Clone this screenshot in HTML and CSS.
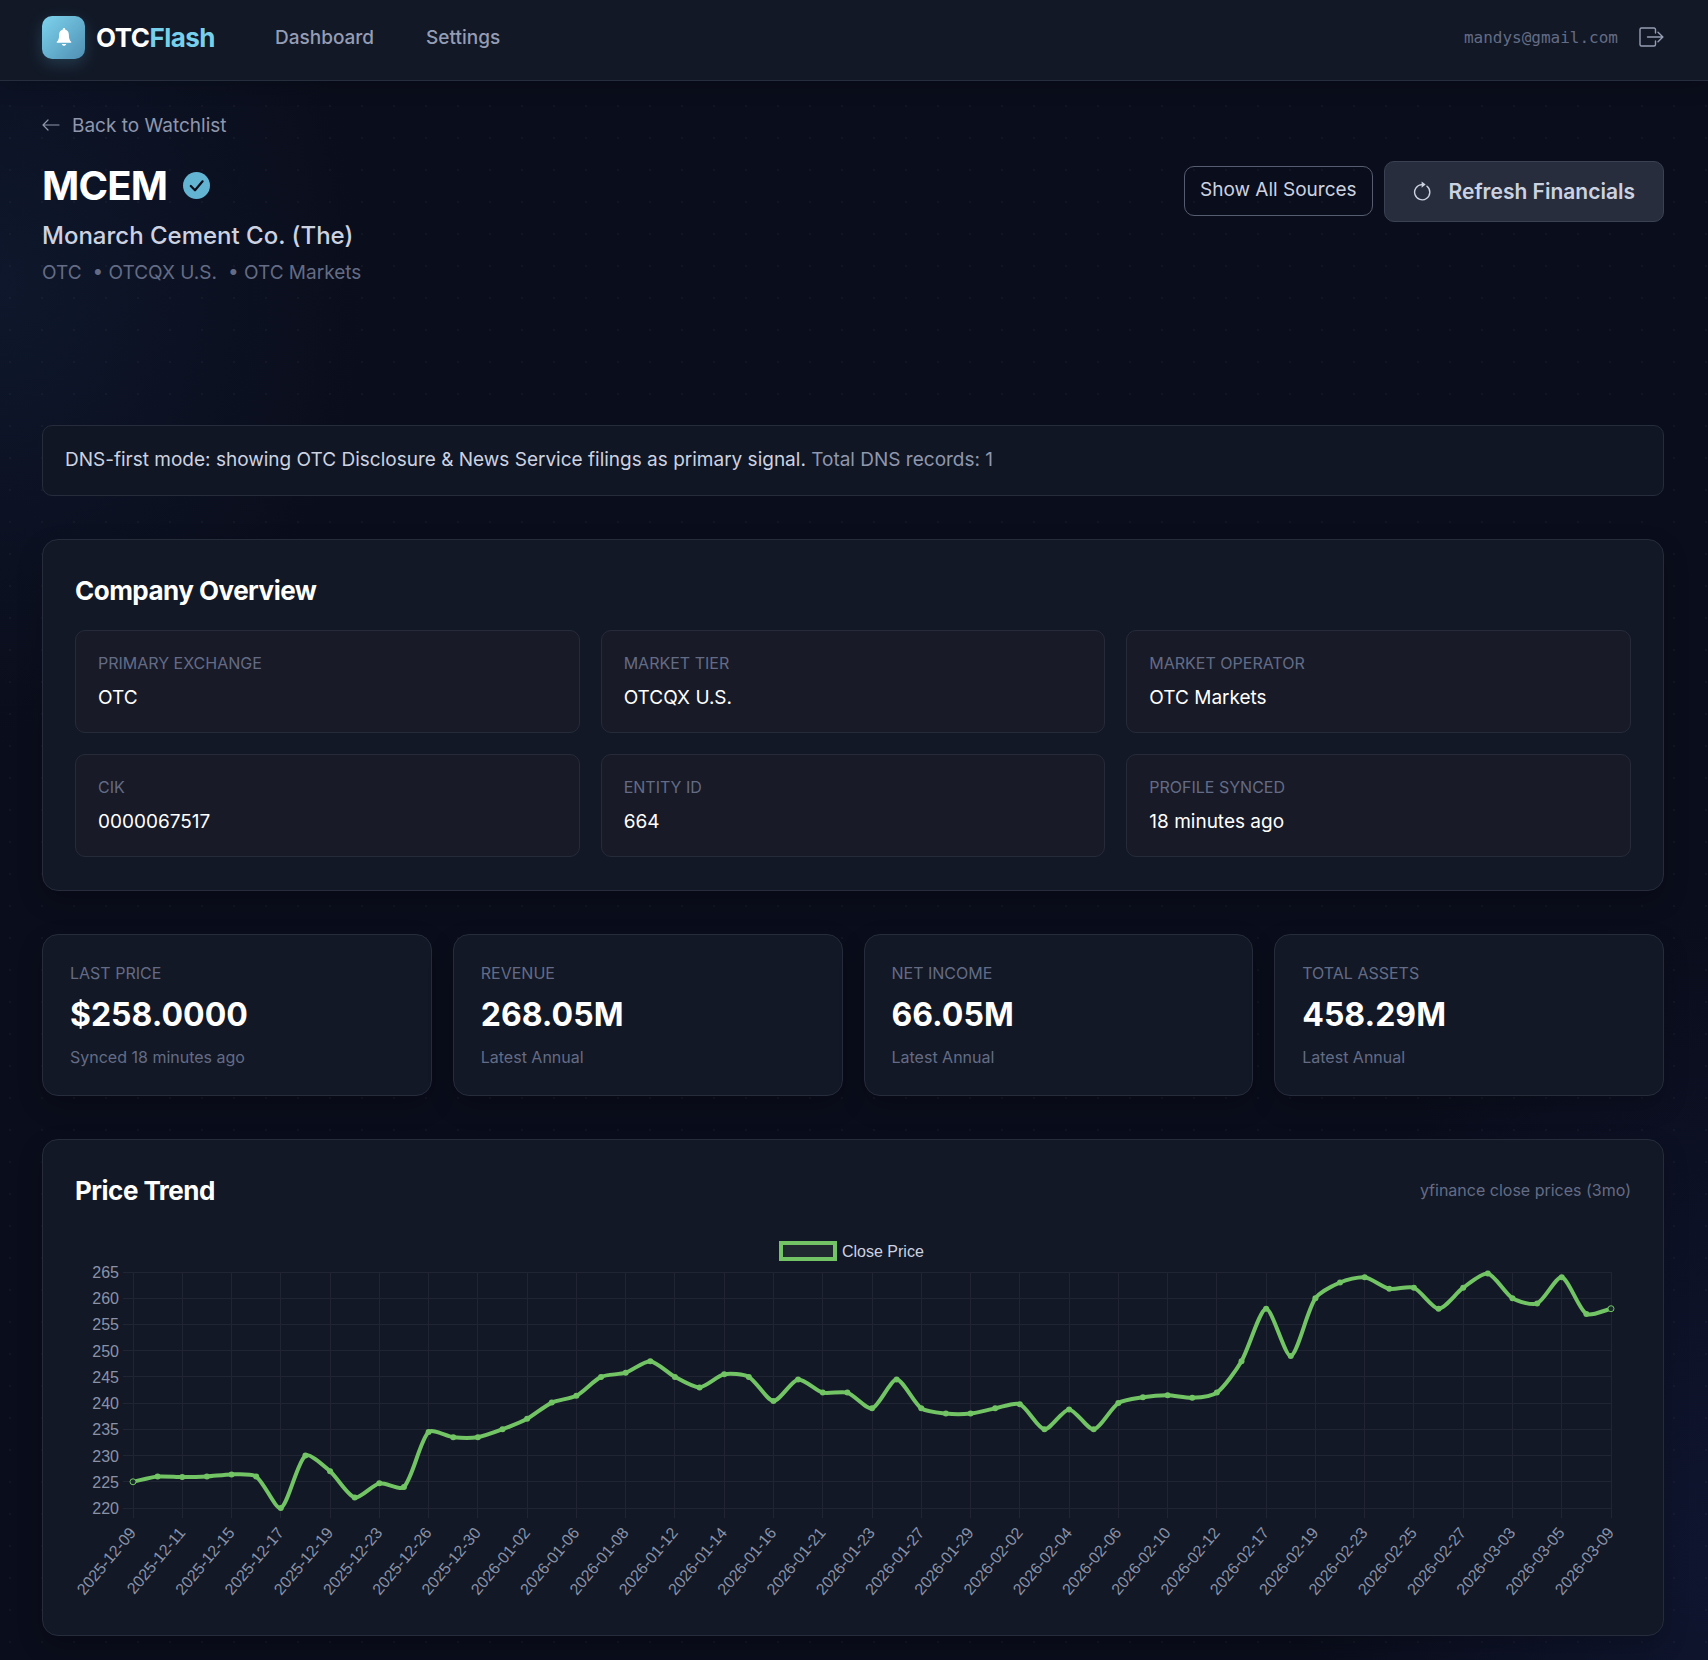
FILE: index.html
```html
<!DOCTYPE html>
<html lang="en">
<head>
    <meta charset="UTF-8">
    <meta name="viewport" content="width=device-width, initial-scale=1.0">
    <title>MCEM - OTCFlash</title>
    <link rel="stylesheet" href="styles.css">
</head>
<body>

    <header class="topbar">
        <a href="#" class="brand">
            <span class="brand-icon">
                <svg viewBox="0 0 24 24" width="22" height="22" fill="#fff">
                    <path d="M12 2.2c-.7 0-1.2.5-1.200 1.200v.4C8.300 4.400 6.700 6.500 6.700 9.200c0 4.200-.7 6.500-2.600 8v1h15.800v-1c-1.900-1.500-2.600-3.800-2.600-8 0-2.700-1.600-4.800-4.100-5.400v-.4c0-.7-.5-1.200-1.200-1.200zM9.600 19.600c.3 1.200 1.200 2 2.400 2s2.100-.8 2.400-2z"/>
                </svg>
            </span>
            <span class="brand-name">OTC<span class="brand-accent">Flash</span></span>
        </a>
        <nav class="nav">
            <a href="#">Dashboard</a>
            <a href="#">Settings</a>
        </nav>
        <div class="user">
            <span class="user-email">mandys@gmail.com</span>
            <button class="logout" aria-label="Log out">
                <svg viewBox="0 0 25 20" width="25" height="20" fill="none" stroke="currentColor" stroke-width="1.4" stroke-linecap="round" stroke-linejoin="round">
                    <path d="M16.500 6V2.500A1.500 1.500 0 0 0 15 1H2.500A1.500 1.500 0 0 0 1 2.500v15A1.500 1.500 0 0 0 2.500 19H15a1.500 1.500 0 0 0 1.500-1.500V14M8.500 10h15.300M19 5.200l4.900 4.800-4.900 4.800"/>
                </svg>
            </button>
        </div>
    </header>

    <main class="page">
        <a href="#" class="back">
            <svg viewBox="0 0 18 12" width="18" height="12" fill="none" stroke="currentColor" stroke-width="1.2" stroke-linecap="round" stroke-linejoin="round">
                <path d="M17 6H1M6 1L1 6l5 5"/>
            </svg>
            Back to Watchlist
        </a>

        <section class="company">
            <div>
                <h1 class="ticker">
                    MCEM
                    <svg viewBox="0 0 27 27" width="27" height="27">
                        <circle cx="13.500" cy="13.500" r="13.500" fill="#63b3d3"/>
                        <path d="M7.800 14l4.200 4.300L19.600 9.300" fill="none" stroke="#0a0d1a" stroke-width="2.200" stroke-linecap="round" stroke-linejoin="round"/>
                    </svg>
                </h1>
                <p class="company-name">Monarch Cement Co. (The)</p>
                <p class="company-meta"><span>OTC</span><span>• OTCQX U.S.</span><span>• OTC Markets</span></p>
            </div>
            <div class="actions">
                <button class="btn-outline">Show All Sources</button>
                <button class="btn-primary">
                    <svg viewBox="0 0 18 20" width="18" height="20" fill="none" stroke="currentColor" stroke-width="1.400" stroke-linecap="round">
                        <path d="M14 5.300A7.600 7.600 0 1 1 9 3.600"/>
                        <path d="M8.600.4v6.400l4-3.200z" fill="currentColor" stroke="none"/>
                    </svg>
                    Refresh Financials
                </button>
            </div>
        </section>

        <div class="notice">DNS-first mode: showing OTC Disclosure &amp; News Service filings as primary signal. <span>Total DNS records: 1</span></div>

        <section class="card">
            <h2>Company Overview</h2>
            <dl class="overview">
                <div class="tile"><dt>PRIMARY EXCHANGE</dt><dd>OTC</dd></div>
                <div class="tile"><dt>MARKET TIER</dt><dd>OTCQX U.S.</dd></div>
                <div class="tile"><dt>MARKET OPERATOR</dt><dd>OTC Markets</dd></div>
                <div class="tile"><dt>CIK</dt><dd>0000067517</dd></div>
                <div class="tile"><dt>ENTITY ID</dt><dd>664</dd></div>
                <div class="tile"><dt>PROFILE SYNCED</dt><dd>18 minutes ago</dd></div>
            </dl>
        </section>

        <section class="stats">
            <div class="stat">
                <div class="stat-label">LAST PRICE</div>
                <div class="stat-value">$258.0000</div>
                <div class="stat-note">Synced 18 minutes ago</div>
            </div>
            <div class="stat">
                <div class="stat-label">REVENUE</div>
                <div class="stat-value">268.05M</div>
                <div class="stat-note">Latest Annual</div>
            </div>
            <div class="stat">
                <div class="stat-label">NET INCOME</div>
                <div class="stat-value">66.05M</div>
                <div class="stat-note">Latest Annual</div>
            </div>
            <div class="stat">
                <div class="stat-label">TOTAL ASSETS</div>
                <div class="stat-value">458.29M</div>
                <div class="stat-note">Latest Annual</div>
            </div>
        </section>

        <section class="card">
            <div class="card-head">
                <h2>Price Trend</h2>
                <span class="card-note">yfinance close prices (3mo)</span>
            </div>
            <svg id="priceChart" class="chart" role="img" aria-label="Close Price"></svg>
        </section>
    </main>

    <script src="chart.js"></script>
</body>
</html>
```
FILE: styles.css
```css
* {
    box-sizing: border-box;
}
body {
    margin: 0;
    min-height: 100vh;
    font-family: 'Inter', sans-serif;
    font-size: 19px;
    line-height: 27px;
    color: #fff;
    background:
        radial-gradient(circle at 10px 10px, rgba(255, 255, 255, 0.03) 1px, transparent 1px) 0 0 / 32px 32px,
        radial-gradient(ellipse 22% 28% at 0% 17%, rgba(24, 46, 82, 0.3), transparent),
        radial-gradient(ellipse 24% 40% at 100% 94%, rgba(24, 36, 84, 0.35), transparent),
        #0a0d1b;
}
h1, h2, p, dl, dd {
    margin: 0;
}
a {
    color: inherit;
    text-decoration: none;
}
button {
    font-family: inherit;
    cursor: pointer;
}

/* top bar */
.topbar {
    display: flex;
    align-items: center;
    height: 81px;
    padding: 0 44px 6px 42px;
    background: #121826;
    border-bottom: 1px solid #262d3d;
    box-shadow: 0 4px 20px rgba(0, 0, 0, 0.2);
}
.brand {
    display: flex;
    align-items: center;
    gap: 11px;
}
.brand-icon {
    display: flex;
    align-items: center;
    justify-content: center;
    width: 43px;
    height: 43px;
    border-radius: 10px;
    background: linear-gradient(135deg, #7dd3ee, #4f8fb3);
    box-shadow: 0 5px 16px rgba(110, 200, 235, 0.2);
}
.brand-name {
    font-size: 26px;
    font-weight: 700;
    letter-spacing: -0.02em;
}
.brand-accent {
    color: #76d0ec;
}
.nav {
    display: flex;
    gap: 52px;
    margin-left: 60px;
    font-weight: 500;
    color: #959db4;
}
.user {
    display: flex;
    align-items: center;
    gap: 21px;
    margin-left: auto;
}
.user-email {
    font-family: 'DejaVu Sans Mono', monospace;
    font-size: 16px;
    color: #646c85;
}
.logout {
    display: flex;
    padding: 0;
    border: 0;
    background: none;
    color: #959db4;
}

/* company header */
.page {
    padding: 30px 44px 24px 42px;
}
.back {
    display: inline-flex;
    align-items: center;
    gap: 12px;
    color: #8f97ad;
}
.company {
    display: flex;
    justify-content: space-between;
    align-items: flex-start;
    min-height: 264px;
    margin-top: 22px;
}
.ticker {
    display: flex;
    align-items: center;
    gap: 16px;
    font-size: 40px;
    line-height: 50px;
    font-weight: 700;
    letter-spacing: -0.02em;
}
.company-name {
    margin-top: 9px;
    font-size: 24px;
    line-height: 32px;
    font-weight: 500;
    color: #cdd2e0;
}
.company-meta {
    display: flex;
    gap: 11px;
    margin-top: 7px;
    color: #646c85;
}
.actions {
    display: flex;
    align-items: center;
    gap: 11px;
}
.btn-outline {
    height: 50px;
    padding: 0 15px 3px;
    border: 1px solid #565d70;
    border-radius: 10px;
    background: none;
    font-size: 19px;
    color: #cdd2e0;
}
.btn-primary {
    display: flex;
    align-items: center;
    gap: 18px;
    height: 61px;
    padding: 0 28px;
    border: 1px solid #3a4152;
    border-radius: 10px;
    background: #272d3c;
    font-size: 21px;
    font-weight: 600;
    color: #cdd2e0;
}

/* cards */
.notice {
    padding: 20px 22px 22px;
    border: 1px solid #262c3b;
    border-radius: 10px;
    background: #101624;
    color: #cdd2e0;
}
.notice span {
    color: #8f97ad;
}
.card {
    margin-top: 43px;
    padding: 32px 32px 33px;
    border: 1px solid #262c3b;
    border-radius: 16px;
    background: #121826;
    box-shadow: 0 10px 26px rgba(0, 0, 0, 0.2);
}
.card h2 {
    font-size: 26px;
    line-height: 37px;
    font-weight: 700;
    letter-spacing: -0.02em;
}
.overview {
    display: grid;
    grid-template-columns: repeat(3, 1fr);
    gap: 21px;
    margin-top: 21px;
}
.tile {
    padding: 20px 22px;
    border: 1px solid #262b3a;
    border-radius: 10px;
    background: #181a28;
}
.tile dt {
    font-size: 16px;
    line-height: 24px;
    color: #646c85;
}
.tile dd {
    margin-top: 8px;
    line-height: 29px;
}
.stats {
    display: grid;
    grid-template-columns: repeat(4, 1fr);
    gap: 21px;
    margin-top: 43px;
}
.stat {
    padding: 26px 27px;
    border: 1px solid #262c3b;
    border-radius: 16px;
    background: #121826;
    box-shadow: 0 10px 26px rgba(0, 0, 0, 0.2);
}
.stat-label, .stat-note, .card-note {
    font-size: 16px;
    line-height: 24px;
    color: #646c85;
}
.stat-value {
    margin: 8px 0;
    font-size: 32px;
    line-height: 44px;
    font-weight: 700;
}

/* chart */
.card-head {
    display: flex;
    justify-content: space-between;
    align-items: center;
}
.chart {
    display: block;
    width: 100%;
    height: 364px;
    margin-top: 29px;
    overflow: visible;
    font-family: 'Liberation Sans', Arial, sans-serif;
    font-size: 16px;
}
.chart .grid {
    stroke: #202433;
    stroke-width: 1;
    shape-rendering: crispEdges;
}
.chart .tick {
    fill: #8a92a8;
    text-anchor: end;
}
.chart .legend-text {
    fill: #cdd2e0;
}
.chart .legend-box {
    fill: #20292f;
    stroke: #72c464;
    stroke-width: 4;
}
.chart .line {
    fill: none;
    stroke: #72c464;
    stroke-width: 4;
    stroke-linejoin: round;
}
.chart .point {
    fill: #72c464;
}
.chart .point-end {
    fill: #1b2a2e;
    stroke: #72c464;
    stroke-width: 1;
}
```
FILE: chart.js
```js
const prices = [
    225, 226, 225.9, 226, 226.4, 226, 220, 230, 227, 222,
    224.7, 224, 234.5, 233.5, 233.5, 235, 237, 240.1, 241.4, 245,
    245.8, 248, 245, 243, 245.5, 245, 240.4, 244.5, 242, 242,
    239, 244.5, 239, 238, 238, 239, 239.8, 235, 238.8, 235,
    240, 241.1, 241.5, 241, 242, 248, 258, 249, 260, 263,
    264, 261.8, 262, 258, 262, 264.7, 260, 259, 264, 257, 258
];
// one label for every second point
const dates = [
    '2025-12-09', '2025-12-11', '2025-12-15', '2025-12-17', '2025-12-19', '2025-12-23', '2025-12-26', '2025-12-30',
    '2026-01-02', '2026-01-06', '2026-01-08', '2026-01-12', '2026-01-14', '2026-01-16', '2026-01-21', '2026-01-23',
    '2026-01-27', '2026-01-29', '2026-02-02', '2026-02-04', '2026-02-06', '2026-02-10', '2026-02-12', '2026-02-17',
    '2026-02-19', '2026-02-23', '2026-02-25', '2026-02-27', '2026-03-03', '2026-03-05', '2026-03-09'
];

const MIN = 220, MAX = 265, STEP = 5, TENSION = 0.25;

function drawChart() {
    const svg = document.getElementById('priceChart');
    const width = svg.clientWidth;
    const left = 58, right = width - 20, top = 34, bottom = 270;
    const x = i => left + (right - left) * i / (prices.length - 1);
    const y = v => bottom - (bottom - top) * (v - MIN) / (MAX - MIN);
    let out = '';

    for (let v = MIN; v <= MAX; v += STEP) {
        out += `<line class="grid" x1="${left - 10}" x2="${right}" y1="${y(v)}" y2="${y(v)}"/>`;
        out += `<text class="tick" x="${left - 14}" y="${y(v) + 6}">${v}</text>`;
    }
    dates.forEach((d, i) => {
        const px = x(i * 2);
        out += `<line class="grid" x1="${px}" x2="${px}" y1="${top}" y2="${bottom + 10}"/>`;
        out += `<text class="tick" transform="translate(${px} ${bottom + 22}) rotate(-50)" y="5">${d}</text>`;
    });

    // smooth line, control points follow the neighbours
    const pts = prices.map((v, i) => [x(i), y(v)]);
    const ctrl = pts.map((p, i) => {
        const a = pts[i - 1] || p, b = pts[i + 1] || p;
        const d1 = Math.hypot(p[0] - a[0], p[1] - a[1]);
        const d2 = Math.hypot(b[0] - p[0], b[1] - p[1]);
        const f1 = TENSION * d1 / (d1 + d2), f2 = TENSION * d2 / (d1 + d2);
        const dx = b[0] - a[0], dy = b[1] - a[1];
        return [p[0] - f1 * dx, p[1] - f1 * dy, p[0] + f2 * dx, p[1] + f2 * dy];
    });
    let path = `M${pts[0]}`;
    for (let i = 1; i < pts.length; i++) {
        path += `C${ctrl[i - 1].slice(2)},${ctrl[i].slice(0, 2)},${pts[i]}`;
    }
    out += `<path class="line" d="${path}"/>`;
    pts.forEach((p, i) => {
        const end = i === 0 || i === pts.length - 1;
        out += `<circle class="${end ? 'point-end' : 'point'}" cx="${p[0]}" cy="${p[1]}" r="3"/>`;
    });

    const mid = width / 2;
    out += `<rect class="legend-box" x="${mid - 72}" y="5" width="54" height="16"/>`;
    out += `<text class="legend-text" x="${mid - 11}" y="19">Close Price</text>`;
    svg.innerHTML = out;
}

window.addEventListener('resize', drawChart);
drawChart();
```
